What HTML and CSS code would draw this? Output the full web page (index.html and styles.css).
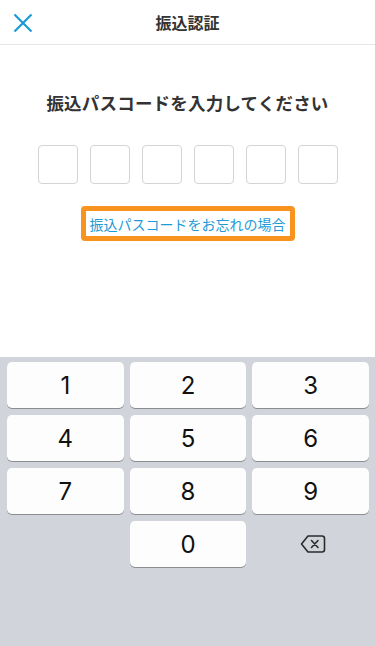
FILE: index.html
```html
<!DOCTYPE html>
<html lang="ja">
<head>
<meta charset="utf-8">
<meta name="viewport" content="width=375">
<link rel="stylesheet" href="styles.css">
<title>振込認証</title>
</head>
<body>
<div class="screen">
  <header class="header">
    <button class="close" aria-label="閉じる">
      <svg width="20" height="20" viewBox="0 0 20 20"><path d="M1.5 1.5 L18.5 18.5 M18.5 1.5 L1.5 18.5" stroke="#1b9ad6" stroke-width="2.2" fill="none"/></svg>
    </button>
    <h1 class="title">振込認証</h1>
  </header>
  <main class="main">
    <p class="prompt">振込パスコードを入力してください</p>
    <div class="code">
      <span class="cell"></span><span class="cell"></span><span class="cell"></span><span class="cell"></span><span class="cell"></span><span class="cell"></span>
    </div>
    <a class="forgot" href="#">振込パスコードをお忘れの場合</a>
  </main>
  <section class="keyboard">
    <div class="key">1</div>
    <div class="key">2</div>
    <div class="key">3</div>
    <div class="key">4</div>
    <div class="key">5</div>
    <div class="key">6</div>
    <div class="key">7</div>
    <div class="key">8</div>
    <div class="key">9</div>
    <div class="blank"></div>
    <div class="key">0</div>
    <div class="del">
      <svg width="26" height="20" viewBox="0 0 26 20"><path d="M8 2 H22 a2.5 2.5 0 0 1 2.5 2.5 V15.5 a2.5 2.5 0 0 1 -2.5 2.5 H8 L1.5 10 Z" fill="none" stroke="#2b2b2b" stroke-width="1.6" stroke-linejoin="round"/><path d="M11.5 6.5 L18 13.5 M18 6.5 L11.5 13.5" stroke="#2b2b2b" stroke-width="1.6" stroke-linecap="round"/></svg>
    </div>
  </section>
</div>
</body>
</html>
```
FILE: styles.css
```css
* { box-sizing: border-box; }
html, body { margin: 0; padding: 0; }
body {
  font-family: "Noto Sans CJK JP", "Noto Sans", sans-serif;
  background: #fff;
  color: #333;
}
.screen {
  width: 375px;
  height: 646px;
  display: flex;
  flex-direction: column;
  overflow: hidden;
}
.header {
  height: 45px;
  border-bottom: 1px solid #e6e6e6;
  display: flex;
  align-items: center;
  justify-content: center;
  position: relative;
  flex: none;
}
.close {
  position: absolute;
  left: 12px;
  top: 12px;
  width: 22px;
  height: 22px;
  padding: 1px;
  border: 0;
  background: none;
  display: flex;
}
.title {
  margin: 0;
  font-size: 16px;
  font-weight: 700;
  color: #333;
  line-height: 22px;
}
.main {
  flex: 1;
  display: flex;
  flex-direction: column;
  align-items: center;
  padding-top: 45px;
}
.prompt {
  margin: 0;
  font-size: 17.5px;
  font-weight: 700;
  line-height: 26px;
  color: #333;
  letter-spacing: 0.2px;
}
.code {
  margin-top: 29px;
  display: flex;
  gap: 12px;
}
.cell {
  width: 40px;
  height: 39px;
  border: 1px solid #d4d4d4;
  border-radius: 4px;
  background: #fff;
}
.forgot {
  margin-top: 22px;
  width: 214px;
  height: 35px;
  border: 5px solid #f7931e;
  border-radius: 4px;
  display: flex;
  align-items: center;
  justify-content: center;
  font-size: 14px;
  color: #1f9bd6;
  text-decoration: none;
  line-height: 20px;
}
.keyboard {
  flex: none;
  height: 289px;
  background: #d1d5db;
  padding: 5px 6px 0 7px;
  display: grid;
  grid-template-columns: repeat(3, 1fr);
  grid-auto-rows: 46px;
  column-gap: 6px;
  row-gap: 7px;
  align-content: start;
}
.key {
  background: #fdfdfe;
  border-radius: 5px;
  box-shadow: 0 1px 0 #8b8d91;
  display: flex;
  align-items: center;
  justify-content: center;
  font-family: "Inter", "Roboto", sans-serif;
  font-size: 24px;
  font-weight: 400;
  color: #111;
}
.del {
  display: flex;
  align-items: center;
  justify-content: center;
  padding-left: 4px;
}
```
